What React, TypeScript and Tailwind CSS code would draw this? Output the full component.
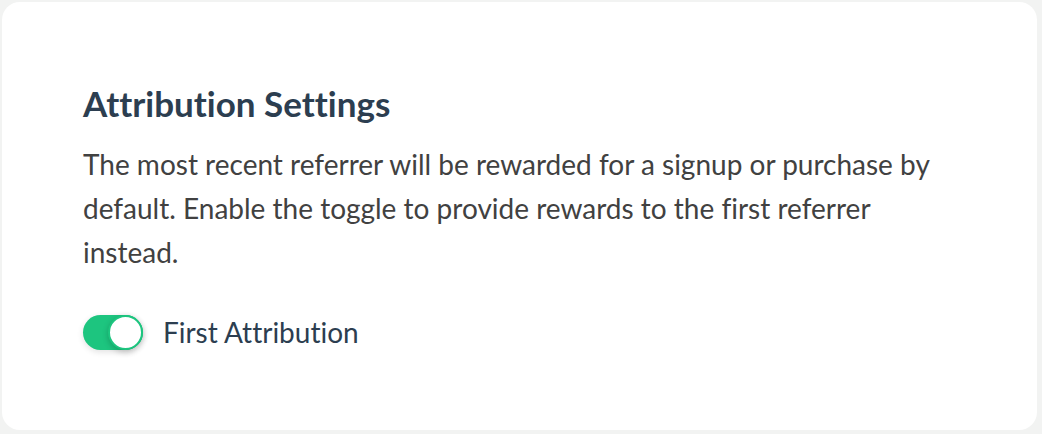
export default function App() {
  return (
    <div className="w-[1042px] h-[434px] bg-[#f2f3f2] pt-[2px] pl-[2px] pr-[5px] pb-[4px] [font-variant-ligatures:none]" style={{ fontFamily: "Lato, 'Noto Sans', sans-serif" }}>
      <div className="w-full h-full bg-white rounded-[18px] pl-[81px] pr-[100px] pt-[79px]">
        <h2 className="text-[35px] leading-[44px] font-bold text-[#2c3e50]">Attribution Settings</h2>
        <p className="mt-[17px] text-[28px] leading-[44px] text-[#414141]">
          The most recent referrer will be rewarded for a signup or purchase by default. Enable the toggle to provide rewards to the first referrer instead.
        </p>
        <div className="mt-[36px] flex items-center gap-[20px] h-[44px]">
          <div className="relative w-[60px] h-[35px] rounded-full bg-[#1dc57f] shadow-[0_2px_6px_rgba(0,0,0,0.12)]">
            <div className="absolute right-0 top-0 w-[35px] h-[35px] rounded-full bg-white border-[2px] border-[#1dc57f] shadow-[0_2px_6px_rgba(0,0,0,0.2)]" />
          </div>
          <span className="text-[28px] leading-[44px] text-[#2c3e50]">First Attribution</span>
        </div>
      </div>
    </div>
  );
}
